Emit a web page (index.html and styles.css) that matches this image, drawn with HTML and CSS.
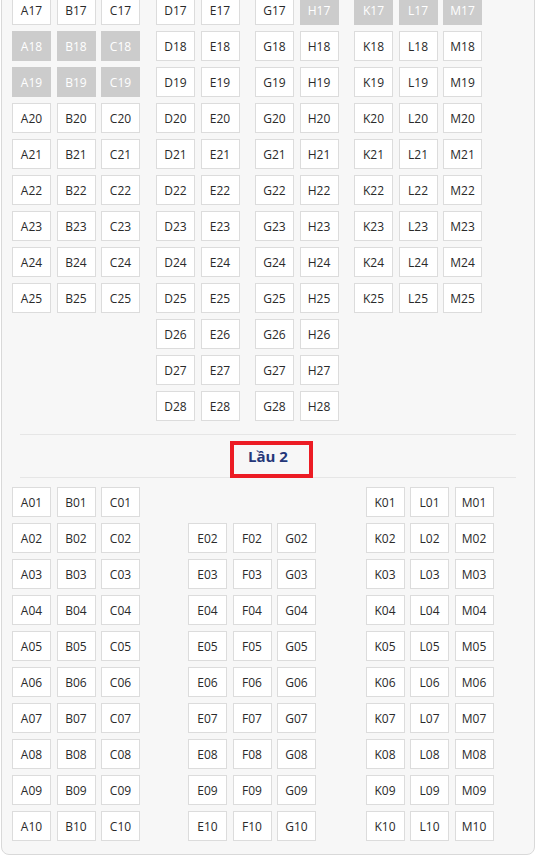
FILE: index.html
```html
<!DOCTYPE html>
<html lang="vi">
<head>
<meta charset="utf-8">
<title>Sơ đồ ghế</title>
<link rel="stylesheet" href="styles.css">
</head>
<body>
<div class="panel">
  <div class="deck deck-upper">
    <div class="row">
      <div class="group g3"><div class="seat">A17</div><div class="seat">B17</div><div class="seat">C17</div></div>
      <div class="group g2"><div class="seat">D17</div><div class="seat">E17</div></div>
      <div class="group g2"><div class="seat">G17</div><div class="seat off">H17</div></div>
      <div class="group g3"><div class="seat off">K17</div><div class="seat off">L17</div><div class="seat off">M17</div></div>
    </div>
    <div class="row">
      <div class="group g3"><div class="seat off">A18</div><div class="seat off">B18</div><div class="seat off">C18</div></div>
      <div class="group g2"><div class="seat">D18</div><div class="seat">E18</div></div>
      <div class="group g2"><div class="seat">G18</div><div class="seat">H18</div></div>
      <div class="group g3"><div class="seat">K18</div><div class="seat">L18</div><div class="seat">M18</div></div>
    </div>
    <div class="row">
      <div class="group g3"><div class="seat off">A19</div><div class="seat off">B19</div><div class="seat off">C19</div></div>
      <div class="group g2"><div class="seat">D19</div><div class="seat">E19</div></div>
      <div class="group g2"><div class="seat">G19</div><div class="seat">H19</div></div>
      <div class="group g3"><div class="seat">K19</div><div class="seat">L19</div><div class="seat">M19</div></div>
    </div>
    <div class="row">
      <div class="group g3"><div class="seat">A20</div><div class="seat">B20</div><div class="seat">C20</div></div>
      <div class="group g2"><div class="seat">D20</div><div class="seat">E20</div></div>
      <div class="group g2"><div class="seat">G20</div><div class="seat">H20</div></div>
      <div class="group g3"><div class="seat">K20</div><div class="seat">L20</div><div class="seat">M20</div></div>
    </div>
    <div class="row">
      <div class="group g3"><div class="seat">A21</div><div class="seat">B21</div><div class="seat">C21</div></div>
      <div class="group g2"><div class="seat">D21</div><div class="seat">E21</div></div>
      <div class="group g2"><div class="seat">G21</div><div class="seat">H21</div></div>
      <div class="group g3"><div class="seat">K21</div><div class="seat">L21</div><div class="seat">M21</div></div>
    </div>
    <div class="row">
      <div class="group g3"><div class="seat">A22</div><div class="seat">B22</div><div class="seat">C22</div></div>
      <div class="group g2"><div class="seat">D22</div><div class="seat">E22</div></div>
      <div class="group g2"><div class="seat">G22</div><div class="seat">H22</div></div>
      <div class="group g3"><div class="seat">K22</div><div class="seat">L22</div><div class="seat">M22</div></div>
    </div>
    <div class="row">
      <div class="group g3"><div class="seat">A23</div><div class="seat">B23</div><div class="seat">C23</div></div>
      <div class="group g2"><div class="seat">D23</div><div class="seat">E23</div></div>
      <div class="group g2"><div class="seat">G23</div><div class="seat">H23</div></div>
      <div class="group g3"><div class="seat">K23</div><div class="seat">L23</div><div class="seat">M23</div></div>
    </div>
    <div class="row">
      <div class="group g3"><div class="seat">A24</div><div class="seat">B24</div><div class="seat">C24</div></div>
      <div class="group g2"><div class="seat">D24</div><div class="seat">E24</div></div>
      <div class="group g2"><div class="seat">G24</div><div class="seat">H24</div></div>
      <div class="group g3"><div class="seat">K24</div><div class="seat">L24</div><div class="seat">M24</div></div>
    </div>
    <div class="row">
      <div class="group g3"><div class="seat">A25</div><div class="seat">B25</div><div class="seat">C25</div></div>
      <div class="group g2"><div class="seat">D25</div><div class="seat">E25</div></div>
      <div class="group g2"><div class="seat">G25</div><div class="seat">H25</div></div>
      <div class="group g3"><div class="seat">K25</div><div class="seat">L25</div><div class="seat">M25</div></div>
    </div>
    <div class="row">
      <div class="group g3"></div>
      <div class="group g2"><div class="seat">D26</div><div class="seat">E26</div></div>
      <div class="group g2"><div class="seat">G26</div><div class="seat">H26</div></div>
      <div class="group g3"></div>
    </div>
    <div class="row">
      <div class="group g3"></div>
      <div class="group g2"><div class="seat">D27</div><div class="seat">E27</div></div>
      <div class="group g2"><div class="seat">G27</div><div class="seat">H27</div></div>
      <div class="group g3"></div>
    </div>
    <div class="row">
      <div class="group g3"></div>
      <div class="group g2"><div class="seat">D28</div><div class="seat">E28</div></div>
      <div class="group g2"><div class="seat">G28</div><div class="seat">H28</div></div>
      <div class="group g3"></div>
    </div>
  </div>

  <div class="floor-title">
    <span class="floor-label">Lầu 2</span>
    <span class="highlight-box"></span>
  </div>

  <div class="deck deck-lower">
    <div class="row">
      <div class="group g3"><div class="seat">A01</div><div class="seat">B01</div><div class="seat">C01</div></div>
      <div class="group g3 mid"></div>
      <div class="group g3 right"><div class="seat">K01</div><div class="seat">L01</div><div class="seat">M01</div></div>
    </div>
    <div class="row">
      <div class="group g3"><div class="seat">A02</div><div class="seat">B02</div><div class="seat">C02</div></div>
      <div class="group g3 mid"><div class="seat">E02</div><div class="seat">F02</div><div class="seat">G02</div></div>
      <div class="group g3 right"><div class="seat">K02</div><div class="seat">L02</div><div class="seat">M02</div></div>
    </div>
    <div class="row">
      <div class="group g3"><div class="seat">A03</div><div class="seat">B03</div><div class="seat">C03</div></div>
      <div class="group g3 mid"><div class="seat">E03</div><div class="seat">F03</div><div class="seat">G03</div></div>
      <div class="group g3 right"><div class="seat">K03</div><div class="seat">L03</div><div class="seat">M03</div></div>
    </div>
    <div class="row">
      <div class="group g3"><div class="seat">A04</div><div class="seat">B04</div><div class="seat">C04</div></div>
      <div class="group g3 mid"><div class="seat">E04</div><div class="seat">F04</div><div class="seat">G04</div></div>
      <div class="group g3 right"><div class="seat">K04</div><div class="seat">L04</div><div class="seat">M04</div></div>
    </div>
    <div class="row">
      <div class="group g3"><div class="seat">A05</div><div class="seat">B05</div><div class="seat">C05</div></div>
      <div class="group g3 mid"><div class="seat">E05</div><div class="seat">F05</div><div class="seat">G05</div></div>
      <div class="group g3 right"><div class="seat">K05</div><div class="seat">L05</div><div class="seat">M05</div></div>
    </div>
    <div class="row">
      <div class="group g3"><div class="seat">A06</div><div class="seat">B06</div><div class="seat">C06</div></div>
      <div class="group g3 mid"><div class="seat">E06</div><div class="seat">F06</div><div class="seat">G06</div></div>
      <div class="group g3 right"><div class="seat">K06</div><div class="seat">L06</div><div class="seat">M06</div></div>
    </div>
    <div class="row">
      <div class="group g3"><div class="seat">A07</div><div class="seat">B07</div><div class="seat">C07</div></div>
      <div class="group g3 mid"><div class="seat">E07</div><div class="seat">F07</div><div class="seat">G07</div></div>
      <div class="group g3 right"><div class="seat">K07</div><div class="seat">L07</div><div class="seat">M07</div></div>
    </div>
    <div class="row">
      <div class="group g3"><div class="seat">A08</div><div class="seat">B08</div><div class="seat">C08</div></div>
      <div class="group g3 mid"><div class="seat">E08</div><div class="seat">F08</div><div class="seat">G08</div></div>
      <div class="group g3 right"><div class="seat">K08</div><div class="seat">L08</div><div class="seat">M08</div></div>
    </div>
    <div class="row">
      <div class="group g3"><div class="seat">A09</div><div class="seat">B09</div><div class="seat">C09</div></div>
      <div class="group g3 mid"><div class="seat">E09</div><div class="seat">F09</div><div class="seat">G09</div></div>
      <div class="group g3 right"><div class="seat">K09</div><div class="seat">L09</div><div class="seat">M09</div></div>
    </div>
    <div class="row">
      <div class="group g3"><div class="seat">A10</div><div class="seat">B10</div><div class="seat">C10</div></div>
      <div class="group g3 mid"><div class="seat">E10</div><div class="seat">F10</div><div class="seat">G10</div></div>
      <div class="group g3 right"><div class="seat">K10</div><div class="seat">L10</div><div class="seat">M10</div></div>
    </div>
  </div>
</div>
</body>
</html>
```

FILE: styles.css
```css
html, body {
  margin: 0;
  padding: 0;
  background: #ffffff;
}

body {
  font-family: "Open Sans", "Noto Sans", "Liberation Sans", sans-serif;
  color: #333333;
  overflow: hidden;
}

.panel {
  width: 534px;
  box-sizing: border-box;
  margin: -16px 0 0 1px;
  padding: 10px 0 13px 10px;
  background: #f7f7f7;
  border: 1px solid #d9d9d9;
  border-radius: 0 0 8px 8px;
}

.deck {
  display: flex;
  flex-direction: column;
  gap: 6px;
}

.row {
  display: flex;
  height: 30px;
}

.deck-upper .row {
  gap: 16px;
}

.group {
  display: flex;
  gap: 5.5px;
  flex: none;
}

.g3 { width: 128px; }
.g2 { width: 83px; }

.deck-lower .mid { margin-left: 48px; }
.deck-lower .right { margin-left: 49.5px; }

.seat {
  width: 39px;
  height: 30px;
  box-sizing: border-box;
  flex: none;
  display: flex;
  align-items: center;
  justify-content: center;
  background: #ffffff;
  border: 1px solid #dcdcdc;
  font-size: 12px;
  color: #2a2a2a;
}

.seat.off {
  background: #cccccc;
  border-color: #cccccc;
  color: #ffffff;
}

.floor-title {
  position: relative;
  margin: 13px 18px 9px 8px;
  height: 42px;
  border-top: 1px solid #e6e6e6;
  border-bottom: 1px solid #e6e6e6;
  display: flex;
  align-items: center;
  justify-content: center;
}

.floor-label {
  font-size: 15px;
  font-weight: 700;
  color: #253779;
}

.highlight-box {
  position: absolute;
  top: 6px;
  left: 210px;
  width: 83px;
  height: 37px;
  box-sizing: border-box;
  border: 4px solid #ec1c24;
}
```
